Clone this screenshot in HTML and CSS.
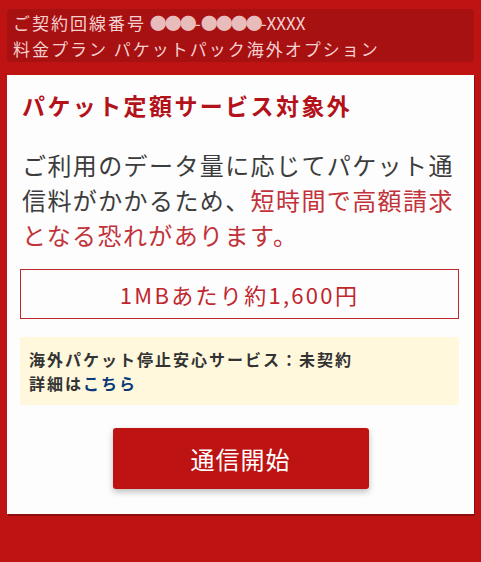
FILE: index.html
```html
<!DOCTYPE html>
<html lang="ja">
<head>
<meta charset="utf-8">
<link rel="stylesheet" href="styles.css">
</head>
<body>
<div class="page">
  <div class="info">
    <div class="info-line"><span class="jp">ご契約回線番号</span> <span class="dots">●●●</span>-<span class="dots">●●●●</span>-XXXX</div>
    <div class="info-line jp">料金プラン パケットパック海外オプション</div>
  </div>
  <div class="card">
    <h1 class="title">パケット定額サービス対象外</h1>
    <p class="desc">ご利用のデータ量に応じてパケット通信料がかかるため、<span class="em">短時間で高額請求となる恐れがあります。</span></p>
    <div class="price">1MBあたり約1,600円</div>
    <div class="notice">
      <div>海外パケット停止安心サービス：未契約</div>
      <div>詳細は<a class="link" href="#">こちら</a></div>
    </div>
    <div class="actions">
      <button class="start">通信開始</button>
    </div>
  </div>
</div>
</body>
</html>
```
FILE: styles.css
```css
html, body {
  margin: 0;
  padding: 0;
}
body {
  background: #be1313;
  font-family: "Noto Sans CJK JP", "Noto Sans", sans-serif;
  width: 481px;
  height: 562px;
  overflow: hidden;
}
.page {
  padding: 9px 7px 0 7px;
}
.info {
  background: #a71111;
  border-radius: 4px;
  padding: 1px 6px 2px 6px;
  color: #f5d0d0;
  font-size: 17px;
  line-height: 26px;
  height: 50px;
}
.info-line {
  white-space: nowrap;
}
.jp {
  letter-spacing: 2px;
}
.dots {
  color: #e9bcbc;
  letter-spacing: -2px;
}
.card {
  margin-top: 13px;
  background: #fdfdfd;
  box-shadow: 1px 2px 0 #8e0d0d;
  padding: 15px 15px 25px 13px;
}
.title {
  margin: 0;
  color: #b3121a;
  font-size: 23px;
  font-weight: bold;
  line-height: 30px;
  letter-spacing: 2.4px;
  padding-left: 2px;
}
.desc {
  margin: 27px 0 0 0;
  color: #3c3c3c;
  font-size: 24px;
  line-height: 35px;
  letter-spacing: 1.4px;
  padding-left: 2px;
}
.em {
  color: #c2323a;
}
.price {
  margin: 17px 0 0 0;
  border: 1px solid #c0272d;
  height: 48px;
  display: flex;
  align-items: center;
  justify-content: center;
  color: #c0272d;
  font-size: 22px;
  letter-spacing: 2.3px;
}
.notice {
  margin-top: 18px;
  background: #fff8dc;
  padding: 10px 9px 10px 9px;
  color: #333333;
  font-size: 16px;
  font-weight: bold;
  line-height: 24px;
  letter-spacing: 2px;
}
.link {
  color: #0b3a78;
  text-decoration: none;
}
.actions {
  display: flex;
  justify-content: center;
  margin-top: 23px;
}
.start {
  width: 256px;
  height: 61px;
  background: #be1313;
  border: none;
  border-radius: 3px;
  color: #ffffff;
  font-family: "Noto Sans CJK JP", sans-serif;
  font-size: 24px;
  letter-spacing: 1px;
  box-shadow: 0 3px 6px rgba(0,0,0,0.25);
  margin-left: 2px;
}
```
